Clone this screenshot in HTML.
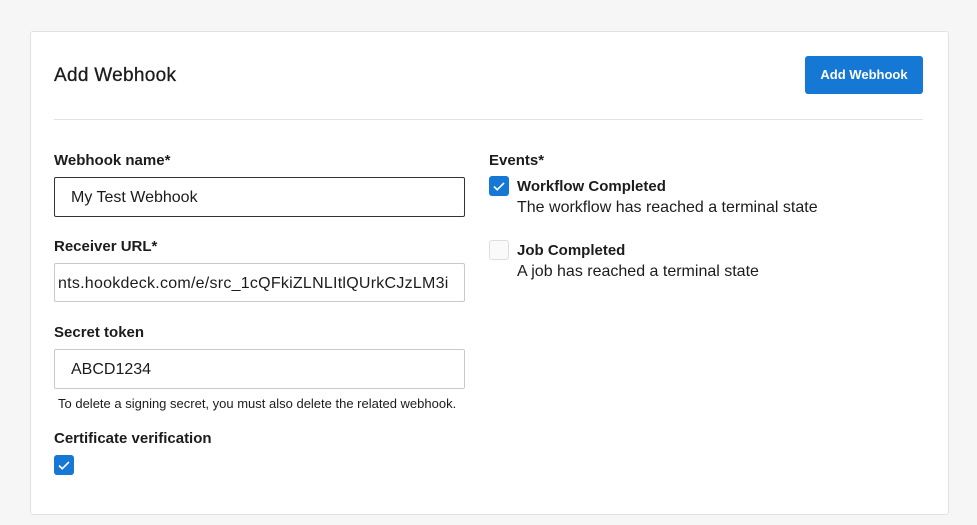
<!DOCTYPE html>
<html><head><style>
body{margin:0;width:977px;height:525px;background:#f6f6f6;font-family:"Liberation Sans",Arial,sans-serif;color:#1c1c1c;position:relative;overflow:hidden}
.card{position:absolute;left:30px;top:31px;width:917px;height:482px;background:#fff;border:1px solid #e2e2e2;border-radius:3px}
.a{position:absolute;white-space:nowrap}
.lbl{font-size:15px;font-weight:bold}
.inp{position:absolute;left:54px;width:409px;height:39px;border:1px solid #c9c9c9;border-radius:2px;font-size:16px;line-height:39px;box-sizing:border-box;padding-left:16px;overflow:hidden;white-space:nowrap}
.cb{position:absolute;width:20px;height:20px;border-radius:3px;box-sizing:border-box}
.on{background:#1478d4}
.off{border:1px solid #ddd;background:#fafafa}
</style></head><body>
<div class="card"></div>
<div class="a" style="left:54px;top:65px;font-size:19px;font-weight:500;letter-spacing:0.3px;-webkit-text-stroke:0.3px #1c1c1c">Add Webhook</div>
<div class="a" style="left:805px;top:56px;width:118px;height:38px;background:#1478d4;border-radius:3px;color:#fff;font-size:13px;font-weight:bold;text-align:center;line-height:38px">Add Webhook</div>
<div class="a" style="left:54px;top:119px;width:869px;height:1px;background:#e2e2e2"></div>

<div class="a lbl" style="left:54px;top:152px">Webhook name*</div>
<div class="inp" style="top:177px;height:40px;width:411px;border-color:#333;line-height:40px">My Test Webhook</div>
<div class="a lbl" style="left:54px;top:238px">Receiver URL*</div>
<div class="inp" style="top:263px;width:411px;padding-left:0"><span style="margin-left:3px;letter-spacing:0.25px">nts.hookdeck.com/e/src_1cQFkiZLNLItlQUrkCJzLM3i</span></div>
<div class="a lbl" style="left:54px;top:324px">Secret token</div>
<div class="inp" style="top:349px;height:40px;width:411px;line-height:40px">ABCD1234</div>
<div class="a" style="left:58px;top:396px;font-size:13px">To delete a signing secret, you must also delete the related webhook.</div>
<div class="a lbl" style="left:54px;top:430px">Certificate verification</div>
<div class="cb on" style="left:54px;top:455px"><svg width="20" height="20"><path d="M5 10.5l3.2 3.2L15 7" stroke="#fff" stroke-width="1.6" fill="none"/></svg></div>

<div class="a lbl" style="left:489px;top:152px">Events*</div>
<div class="cb on" style="left:489px;top:176px"><svg width="20" height="20"><path d="M5 10.5l3.2 3.2L15 7" stroke="#fff" stroke-width="1.6" fill="none"/></svg></div>
<div class="a lbl" style="left:517px;top:178px">Workflow Completed</div>
<div class="a" style="left:517px;top:199px;font-size:16px">The workflow has reached a terminal state</div>
<div class="cb off" style="left:489px;top:240px"></div>
<div class="a lbl" style="left:517px;top:242px">Job Completed</div>
<div class="a" style="left:517px;top:263px;font-size:16px">A job has reached a terminal state</div>
</body></html>
